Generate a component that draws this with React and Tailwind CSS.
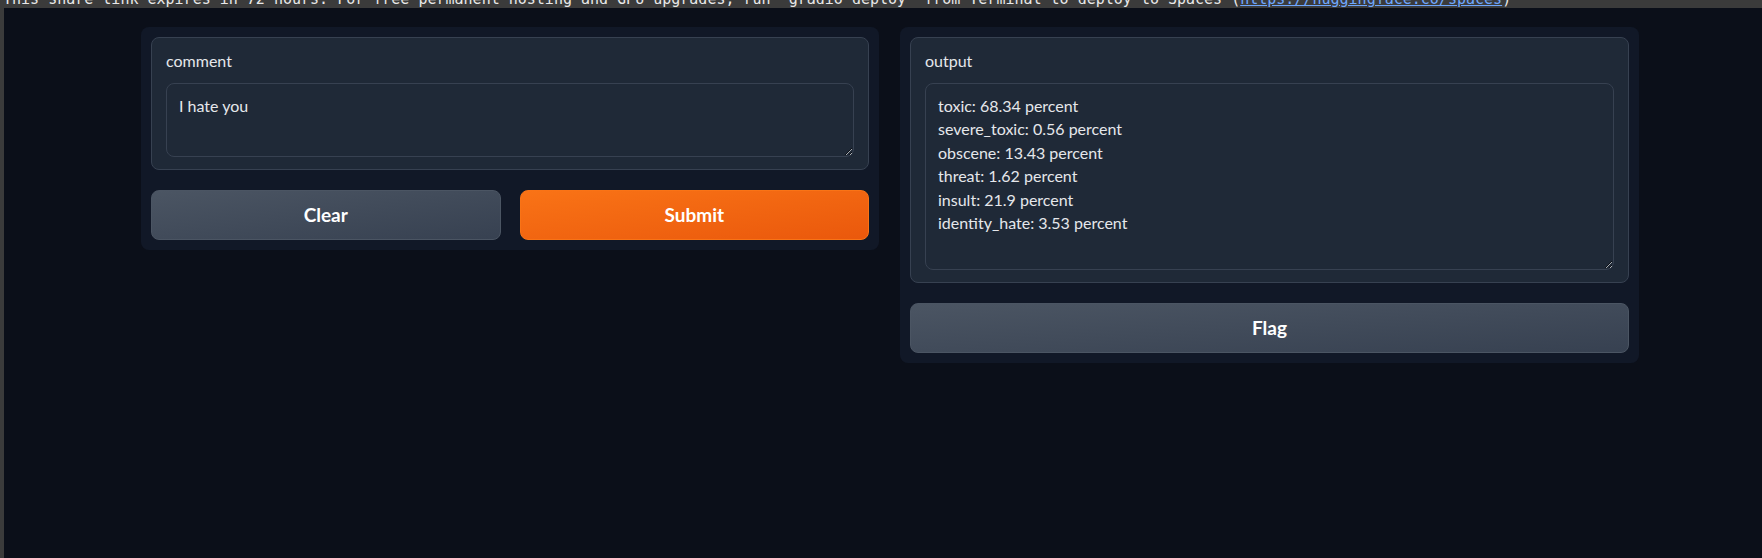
import { useState } from 'react';

const font = { fontFamily: 'Lato, "Noto Sans", sans-serif' };

const results = [
  'toxic: 68.34 percent',
  'severe_toxic: 0.56 percent',
  'obscene: 13.43 percent',
  'threat: 1.62 percent',
  'insult: 21.9 percent',
  'identity_hate: 3.53 percent',
];

function Block({ label, value, height, onChange }) {
  return (
    <div className="rounded-lg border border-[#374151] bg-[#1f2937] px-[14px] pt-[13px] pb-[12px]">
      <div className="mb-[12px] text-[16px] leading-[20px] text-[#e5e7eb]">{label}</div>
      <textarea
        value={value}
        onChange={onChange}
        readOnly={!onChange}
        className={`block w-full resize-y rounded-lg border border-[#374151] bg-[#1f2937] px-[12px] py-[10px] text-[16px] leading-[23.4px] text-[#e5e7eb] outline-none scheme-dark ${height}`}
      />
    </div>
  );
}

function App() {
  const [comment, setComment] = useState('I hate you');

  return (
    <div className="flex min-h-screen flex-col bg-[#0b0f19]" style={font}>
      <div className="h-[8px] overflow-hidden bg-[#3b3b3b]">
        <div className="-mt-[10px] whitespace-nowrap pl-[3px] text-[15px] leading-[18px] text-[#e8e8e8]" style={{ fontFamily: '"DejaVu Sans Mono", monospace' }}>
          This share link expires in 72 hours. For free permanent hosting and GPU upgrades, run `gradio deploy` from Terminal to deploy to Spaces (
          <span className="text-[#6fa8ff] underline">https://huggingface.co/spaces</span>)
        </div>
      </div>
      <div className="flex flex-1">
        <div className="w-[4px] bg-[#3b3b3b]" />
        <div className="flex flex-1 items-start gap-[21px] pt-[19px] pl-[137px]">
          <div className="w-[738px] rounded-lg bg-[#111827] p-[10px]">
            <Block label="comment" value={comment} height="h-[74px]" onChange={(e) => setComment(e.target.value)} />
            <div className="mt-[20px] grid grid-cols-2 gap-[19px]">
              <button className="h-[50px] rounded-lg border border-[#4b5563] bg-gradient-to-br from-[#4b5563] to-[#374151] text-[19px] font-bold text-white">
                Clear
              </button>
              <button className="h-[50px] rounded-lg border border-[#f97316] bg-gradient-to-br from-[#f97316] to-[#ea580c] text-[19px] font-bold text-white">
                Submit
              </button>
            </div>
          </div>
          <div className="w-[739px] rounded-lg bg-[#111827] p-[10px]">
            <Block label="output" value={results.join('\n')} height="h-[187px]" />
            <button className="mt-[20px] h-[50px] w-full rounded-lg border border-[#4b5563] bg-gradient-to-br from-[#4b5563] to-[#374151] text-[19px] font-bold text-white">
              Flag
            </button>
          </div>
        </div>
      </div>
    </div>
  );
}

export default App;
